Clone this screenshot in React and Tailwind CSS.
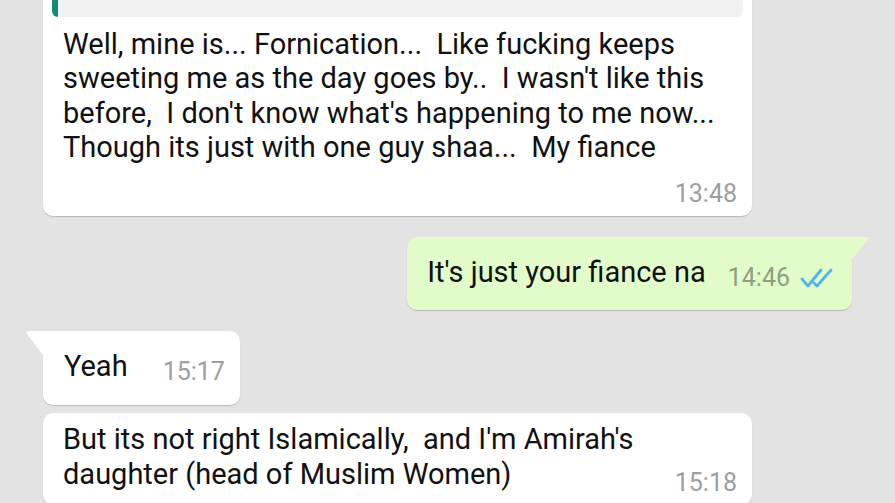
import React from 'react';

const font = { fontFamily: 'Roboto, "Noto Sans", sans-serif' };

const Checks = () => (
    <svg width="36" height="22" viewBox="0 0 36 22" fill="none" stroke="#4fb6ec" strokeWidth="2.8" strokeLinecap="round" strokeLinejoin="round">
        <path d="M2 12 L8 19 L21 3" />
        <path d="M14 16 L17 19 L31 3" />
    </svg>
);

const App = () => {
    return (
        <div className="w-[895px] h-[503px] overflow-hidden bg-[#e3e3e3] px-[43px] flex flex-col text-[#111111]" style={font}>
            {/* incoming, long, with quoted reply (cut off at top) */}
            <div className="w-[709px] mt-[-32px] bg-white rounded-[10px] shadow-[0_1px_1px_rgba(0,0,0,0.18)] pt-[9px] pb-[10px]">
                <div className="mx-[9px] h-[40px] bg-[#f2f2f2] rounded-[6px] border-l-[6px] border-[#0f8c74]" />
                <div className="mt-[9.5px] pl-[20px] pr-[10px] text-[29px] leading-[34.5px] whitespace-pre">
                    {'Well, mine is... Fornication...  Like fucking keeps\nsweeting me as the day goes by..  I wasn\'t like this\nbefore,  I don\'t know what\'s happening to me now...\nThough its just with one guy shaa...  My fiance'}
                </div>
                <div className="mt-[17px] pr-[15px] flex justify-end text-[25px] leading-[24px] text-[#9e9e9e]">13:48</div>
            </div>

            {/* outgoing */}
            <div className="mt-[21px] self-end relative">
                <div className="bg-[#e2fcc9] rounded-[10px] rounded-tr-none shadow-[0_1px_1px_rgba(0,0,0,0.18)] pl-[20px] pr-[16px] pt-[18.5px] pb-[20px] flex items-end">
                    <span className="text-[29px] leading-[34.5px]">It's just your fiance na</span>
                    <span className="ml-[22px] text-[25px] leading-[24px] text-[#8f9f86]">14:46</span>
                    <span className="ml-[10px] mb-[1px]"><Checks /></span>
                </div>
                <svg className="absolute top-0 right-[-18px]" width="18" height="22" viewBox="0 0 18 22">
                    <path d="M0 0 H15 Q18 0 16 3 L0 22 Z" fill="#e2fcc9" />
                </svg>
            </div>

            {/* incoming, short with tail */}
            <div className="mt-[21px] self-start relative">
                <svg className="absolute top-0 left-[-18px]" width="18" height="24" viewBox="0 0 18 24">
                    <path d="M18 0 H3 Q0 0 2 3 L18 24 Z" fill="#ffffff" />
                </svg>
                <div className="bg-white rounded-[10px] rounded-tl-none shadow-[0_1px_1px_rgba(0,0,0,0.18)] pl-[21px] pr-[15px] pt-[18.5px] pb-[21px] flex items-end">
                    <span className="text-[29px] leading-[34.5px]">Yeah</span>
                    <span className="ml-[35px] text-[25px] leading-[24px] text-[#9e9e9e]">15:17</span>
                </div>
            </div>

            {/* incoming, continuation */}
            <div className="w-[709px] mt-[8px] bg-white rounded-[10px] shadow-[0_1px_1px_rgba(0,0,0,0.18)] pl-[20px] pr-[15px] pt-[9.5px] pb-[14px] flex items-end justify-between">
                <div className="text-[29px] leading-[34.5px] whitespace-pre">
                    {'But its not right Islamically,  and I\'m Amirah\'s\ndaughter (head of Muslim Women)'}
                </div>
                <span className="text-[25px] leading-[24px] text-[#9e9e9e] mb-[-4px]">15:18</span>
            </div>
        </div>
    );
};

export default App;
